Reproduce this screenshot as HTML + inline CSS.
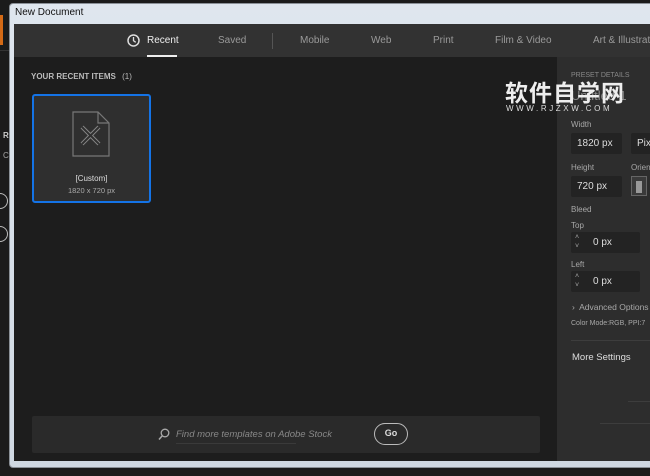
<!DOCTYPE html>
<html><head><style>
*{margin:0;padding:0;box-sizing:border-box}
body{width:650px;height:476px;background:#1b1b1b;position:relative;overflow:hidden;font-family:"Liberation Sans",sans-serif;}
.abs{position:absolute;white-space:nowrap}
.frame{left:9px;top:3px;width:660px;height:465px;background:linear-gradient(#dfe6ee,#cfd8e2);border:1px solid #8a9097;border-radius:4px 0 0 4px}
.tb{left:15px;top:7px;font-size:10px;color:#111}
.content{left:14px;top:24px;width:640px;height:437px;background:#1d1d1d}
.tabs{left:14px;top:24px;width:640px;height:33px;background:#323232}
.tab{top:35px;font-size:10px;color:#9a9a9a}
.side{left:557px;top:57px;width:100px;height:404px;background:#2d2d2d}
.lbl{font-size:8px;color:#a8a8a8}
.inp{background:#232323;border-radius:2px;color:#ddd;font-size:10px;padding-left:6px;line-height:21px;height:21px}
</style></head><body>
<div class="abs" style="left:0;top:15px;width:3px;height:30px;background:#d46a16"></div>
<div class="abs" style="left:0;top:50px;width:10px;height:1px;background:#333"></div>
<div class="abs lbl" style="left:3px;top:131px;color:#ccc;font-weight:bold">R</div>
<div class="abs lbl" style="left:3px;top:151px">C</div>
<div class="abs" style="left:-8px;top:193px;width:16px;height:16px;border:1px solid #bbb;border-radius:50%"></div>
<div class="abs" style="left:-8px;top:226px;width:16px;height:16px;border:1px solid #bbb;border-radius:50%"></div>
<div class="abs frame"></div>
<div class="abs tb">New Document</div>
<div class="abs content"></div>
<div class="abs tabs"></div>
<svg class="abs" style="left:127px;top:34px" width="13" height="13" viewBox="0 0 13 13"><circle cx="6.5" cy="6.5" r="5.5" fill="none" stroke="#ddd" stroke-width="1.5"/><path d="M6.5 3v3.7l2.2 1.6" fill="none" stroke="#ddd" stroke-width="1.3"/></svg>
<div class="abs tab" style="left:147px;color:#eee">Recent</div>
<div class="abs" style="left:147px;top:55px;width:30px;height:2px;background:#eee"></div>
<div class="abs tab" style="left:218px">Saved</div>
<div class="abs" style="left:272px;top:33px;width:1px;height:16px;background:#555"></div>
<div class="abs tab" style="left:300px">Mobile</div>
<div class="abs tab" style="left:371px">Web</div>
<div class="abs tab" style="left:433px">Print</div>
<div class="abs tab" style="left:495px">Film &amp; Video</div>
<div class="abs tab" style="left:593px">Art &amp; Illustrat</div>
<div class="abs" style="left:31px;top:72px;font-size:8px;color:#bbb;font-weight:bold">YOUR RECENT ITEMS <span style="font-weight:normal;margin-left:4px">(1)</span></div>
<div class="abs" style="left:32px;top:94px;width:119px;height:109px;background:#2f2f2f;border:2px solid #1473e6;border-radius:3px"></div>
<svg class="abs" style="left:72px;top:111px" width="38" height="46" viewBox="0 0 38 46"><path d="M1 1h25l11 11v33H1z M26 1v11h11" fill="none" stroke="#777" stroke-width="1.2"/><path d="M10 16l17 17M27 16L10 33" stroke="#888" stroke-width="4" fill="none"/><path d="M10 16l17 17M27 16L10 33" stroke="#2f2f2f" stroke-width="2" fill="none"/></svg>
<div class="abs" style="left:32px;top:174px;width:119px;text-align:center;font-size:8px;color:#ddd">[Custom]</div>
<div class="abs" style="left:32px;top:186px;width:119px;text-align:center;font-size:7.5px;color:#aaa">1820 x 720 px</div>
<div class="abs" style="left:32px;top:416px;width:508px;height:37px;background:#2a2a2a;border-radius:2px"></div>
<svg class="abs" style="left:158px;top:428px" width="12" height="13" viewBox="0 0 12 13"><circle cx="7" cy="5" r="3.8" fill="none" stroke="#aaa" stroke-width="1.3"/><path d="M4.3 7.8L1 11.5" stroke="#aaa" stroke-width="1.5"/></svg>
<div class="abs" style="left:176px;top:429px;font-size:9.5px;color:#888;font-style:italic">Find more templates on Adobe Stock</div>
<div class="abs" style="left:176px;top:443px;width:120px;height:1px;background:#3a3a3a"></div>
<div class="abs" style="left:374px;top:423px;width:34px;height:22px;border:1.5px solid #bbb;border-radius:11px;font-size:9px;color:#ddd;text-align:center;line-height:19px;font-weight:bold">Go</div>
<div class="abs side"></div>
<div class="abs lbl" style="left:571px;top:72px;font-size:7px;color:#888">PRESET DETAILS</div>
<div class="abs" style="left:571px;top:88px;font-size:13px;color:#888">Untitled-1</div>
<div class="abs" style="left:505px;top:77px;font-size:23px;color:#eee;font-weight:bold;font-family:'Noto Sans CJK SC',sans-serif;letter-spacing:1px;line-height:28px">软件自学网</div>
<div class="abs" style="left:506px;top:104px;font-size:8px;color:#ddd;letter-spacing:2.6px">WWW.RJZXW.COM</div>
<div class="abs lbl" style="left:571px;top:120px">Width</div>
<div class="abs inp" style="left:571px;top:133px;width:51px">1820 px</div>
<div class="abs inp" style="left:631px;top:133px;width:30px">Pix</div>
<div class="abs lbl" style="left:571px;top:163px">Height</div>
<div class="abs lbl" style="left:631px;top:163px">Orien</div>
<div class="abs inp" style="left:571px;top:176px;width:51px">720 px</div>
<div class="abs" style="left:631px;top:176px;width:16px;height:20px;background:#3a3a3a;border:1px solid #666"><div style="margin:4px auto 0;width:6px;height:12px;background:#999"></div></div>
<div class="abs lbl" style="left:571px;top:205px">Bleed</div>
<div class="abs lbl" style="left:571px;top:221px">Top</div>
<div class="abs inp" style="left:571px;top:232px;width:69px;padding-left:22px">0 px</div>
<div class="abs lbl" style="left:575px;top:233px;font-size:7px;line-height:9px">˄<br>˅</div>
<div class="abs lbl" style="left:571px;top:260px">Left</div>
<div class="abs inp" style="left:571px;top:271px;width:69px;padding-left:22px">0 px</div>
<div class="abs lbl" style="left:575px;top:272px;font-size:7px;line-height:9px">˄<br>˅</div>
<div class="abs lbl" style="left:572px;top:302px;font-size:8.5px">›&nbsp; Advanced Options</div>
<div class="abs lbl" style="left:571px;top:320px;font-size:7px">Color Mode:RGB, PPI:7</div>
<div class="abs" style="left:571px;top:340px;width:80px;height:1px;background:#3d3d3d"></div>
<div class="abs" style="left:572px;top:352px;font-size:9.5px;color:#ddd">More Settings</div>
<div class="abs" style="left:628px;top:401px;width:25px;height:1px;background:#3d3d3d"></div>
<div class="abs" style="left:600px;top:423px;width:50px;height:1px;background:#3d3d3d"></div>
</body></html>
